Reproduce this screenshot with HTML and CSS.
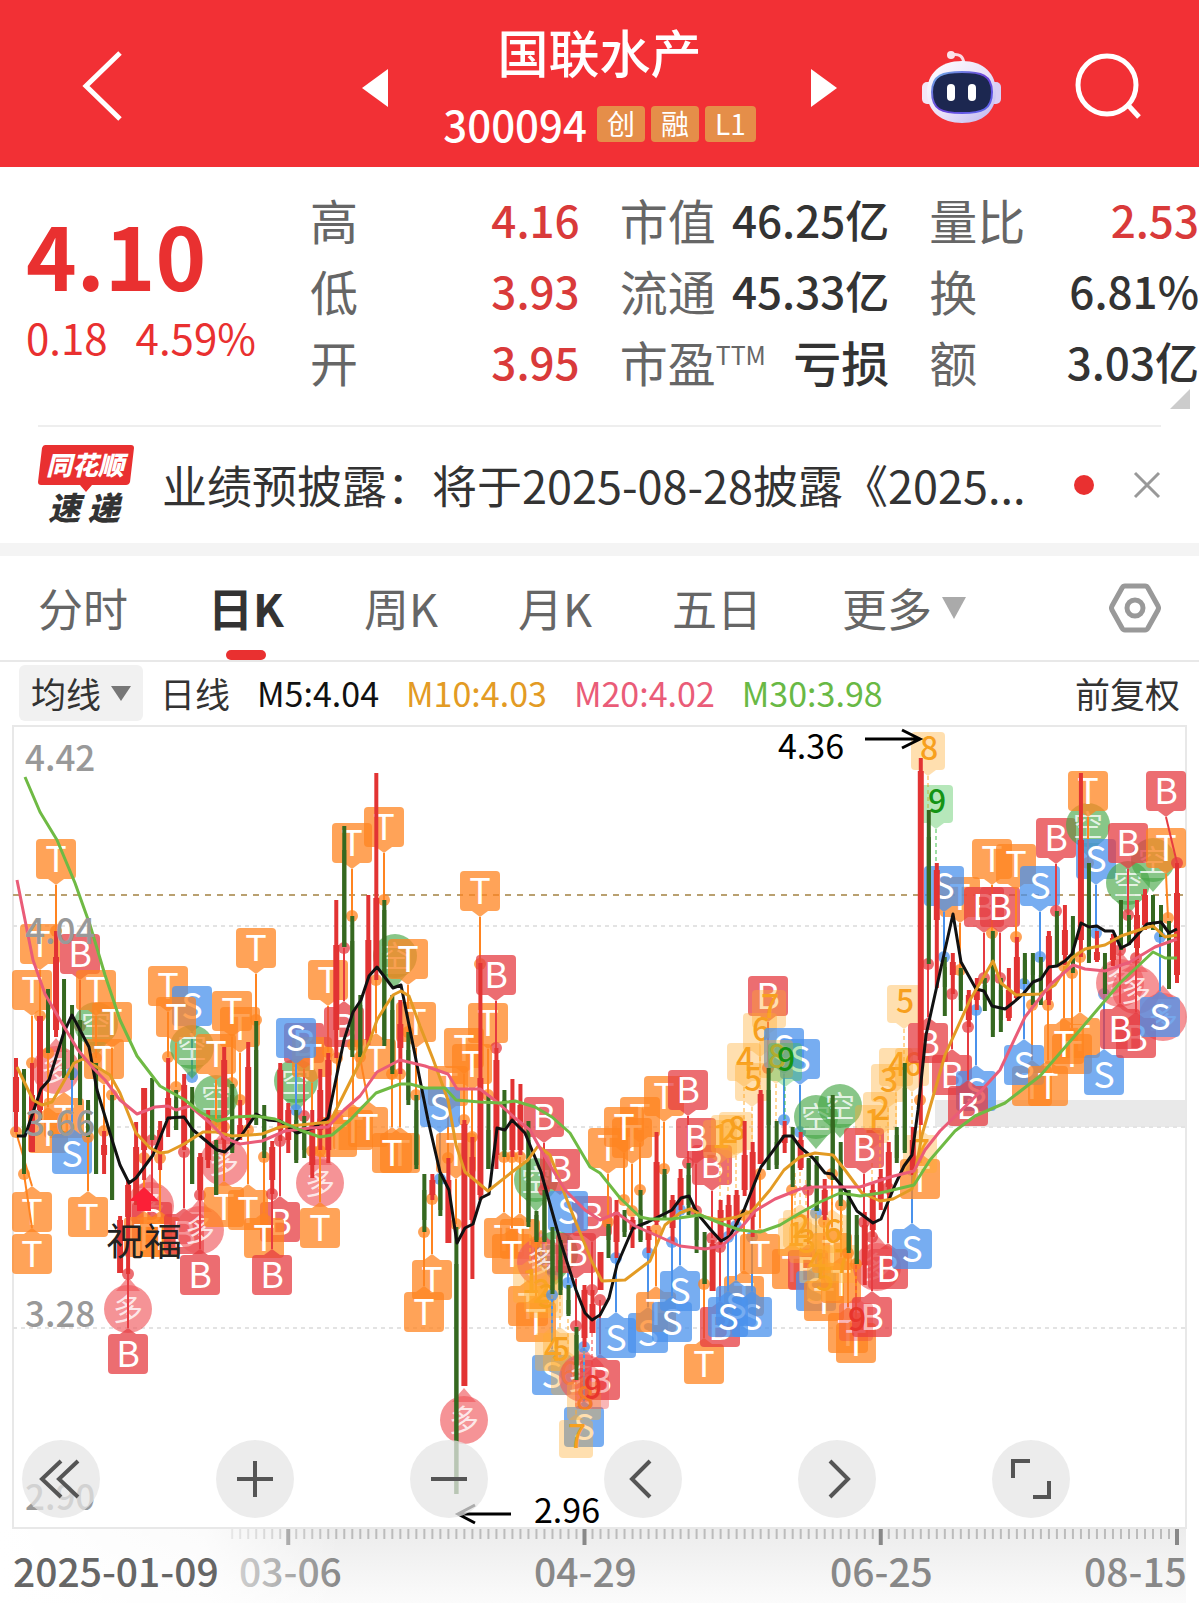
FILE: index.html
```html
<!DOCTYPE html>
<html lang="zh-CN">
<head>
  <meta charset="UTF-8" />
  <meta name="viewport" content="width=device-width, initial-scale=1.0"/>
  <title>国联水产 300094</title>
  <link rel="stylesheet" href="styles.css">
</head>
<body>
  <header class="top-bar">
    <button class="icon-button back-button" aria-label="返回">
      <svg width="40" height="70" viewBox="0 0 40 70"><path d="M38 2 L4 35 L38 68" fill="none" stroke="#fff" stroke-width="5"/></svg>
    </button>
    <div class="stock-switch">
      <button class="icon-button" aria-label="上一只">
        <svg width="26" height="40" viewBox="0 0 26 40"><path d="M26 1 V39 L0 20 Z" fill="#fff"/></svg>
      </button>
      <div class="stock-name">
        <h1>国联水产</h1>
        <div class="stock-code">
          <span>300094</span>
          <span class="badge">创</span>
          <span class="badge">融</span>
          <span class="badge">L1</span>
        </div>
      </div>
      <button class="icon-button" aria-label="下一只">
        <svg width="26" height="40" viewBox="0 0 26 40"><path d="M0 1 V39 L26 20 Z" fill="#fff"/></svg>
      </button>
    </div>
    <div class="top-actions">
      <button class="icon-button" aria-label="助手">
        <svg width="79" height="76" viewBox="0 0 79 76">
          <defs>
            <linearGradient id="shell" x1="0" y1="0" x2="1" y2="1">
              <stop offset="0" stop-color="#fff"/><stop offset=".55" stop-color="#e9e0f8"/><stop offset="1" stop-color="#b9b4f0"/>
            </linearGradient>
            <linearGradient id="rim" x1="0" y1="0" x2="1" y2="1">
              <stop offset="0" stop-color="#6fb6e8"/><stop offset=".5" stop-color="#6a3fd8"/><stop offset="1" stop-color="#5a6cf0"/>
            </linearGradient>
          </defs>
          <path d="M29 7 Q41 4 42 16" fill="none" stroke="#fbd9e2" stroke-width="3"/>
          <circle cx="29" cy="7" r="4" fill="#fbe3ea"/>
          <rect x="0" y="34" width="12" height="22" rx="5" fill="#f3e6f6"/>
          <rect x="67" y="34" width="12" height="22" rx="5" fill="#d9cff6"/>
          <path d="M40 13 C62 13 74 26 74 44 C74 64 60 75 40 75 C20 75 5 64 5 44 C5 26 18 13 40 13Z" fill="url(#shell)"/>
          <path d="M40 24 C59 24 70 27 70 44 C70 62 60 65 40 65 C20 65 10 62 10 44 C10 27 21 24 40 24Z" fill="#1c2750" stroke="url(#rim)" stroke-width="2"/>
          <rect x="25" y="36" width="8" height="17" rx="4" fill="#fff"/>
          <rect x="46" y="36" width="8" height="17" rx="4" fill="#fff"/>
        </svg>
      </button>
      <button class="icon-button" aria-label="搜索">
        <svg width="66" height="66" viewBox="0 0 66 66"><circle cx="32" cy="32" r="29" fill="none" stroke="#fff" stroke-width="5"/><path d="M52 51 L64 64" stroke="#fff" stroke-width="5"/></svg>
      </button>
    </div>
  </header>

  <section class="quote">
    <div class="price-box">
      <div class="price">4.10</div>
      <div class="change"><span>0.18</span><span>4.59%</span></div>
    </div>
    <dl class="stats">
      <div><dt>高</dt><dd class="up">4.16</dd></div>
      <div><dt>市值</dt><dd>46.25亿</dd></div>
      <div><dt>量比</dt><dd class="up">2.53</dd></div>
      <div><dt>低</dt><dd class="up">3.93</dd></div>
      <div><dt>流通</dt><dd>45.33亿</dd></div>
      <div><dt>换</dt><dd>6.81%</dd></div>
      <div><dt>开</dt><dd class="up">3.95</dd></div>
      <div><dt>市盈<sup>TTM</sup></dt><dd class="word">亏损</dd></div>
      <div><dt>额</dt><dd>3.03亿</dd></div>
    </dl>
    <svg class="expand-corner" width="20" height="20" viewBox="0 0 20 20"><path d="M20 0 V20 H0 Z" fill="#ccc"/></svg>
  </section>

  <section class="news">
    <svg class="news-logo" width="96" height="80" viewBox="0 0 96 80">
      <path d="M7 0 H93 Q96 0 96 3 L92 37 Q91 40 88 40 H54 L48 47 L42 40 H3 Q0 40 0 37 L4 3 Q5 0 7 0Z" fill="#e93030"/>
      <text x="47" y="30" class="logo-top">同花顺</text>
      <text x="46" y="75" class="logo-bottom">速 递</text>
    </svg>
    <a href="#" class="news-title">业绩预披露：将于2025-08-28披露《2025...</a>
    <span class="news-dot"></span>
    <button class="icon-button" aria-label="关闭">
      <svg width="28" height="28" viewBox="0 0 28 28"><path d="M2 2 L26 26 M26 2 L2 26" stroke="#999" stroke-width="3"/></svg>
    </button>
  </section>

  <nav class="tabs">
    <button>分时</button>
    <button class="active">日K</button>
    <button>周K</button>
    <button>月K</button>
    <button>五日</button>
    <button>更多<svg width="24" height="22" viewBox="0 0 24 22"><path d="M0 0 H24 L12 22 Z" fill="#aaa"/></svg></button>
    <button class="settings" aria-label="设置">
      <svg width="52" height="50" viewBox="0 0 52 50"><path d="M16 3 H36 Q38 3 39 5 L49 23 Q50 25 49 27 L39 45 Q38 47 36 47 H16 Q14 47 13 45 L3 27 Q2 25 3 23 L13 5 Q14 3 16 3Z" fill="none" stroke="#999" stroke-width="5"/><circle cx="26" cy="25" r="8" fill="none" stroke="#999" stroke-width="5"/></svg>
    </button>
  </nav>

  <div class="ma-row">
    <label class="ma-select">
      <select aria-label="指标"><option>均线</option><option>BOLL</option></select>
      <svg width="20" height="15" viewBox="0 0 20 15"><path d="M0 0 H20 L10 15 Z" fill="#777"/></svg>
    </label>
    <span class="ma-name">日线</span>
    <span class="ma-value m5">M5:4.04</span>
    <span class="ma-value m10">M10:4.03</span>
    <span class="ma-value m20">M20:4.02</span>
    <span class="ma-value m30">M30:3.98</span>
    <span class="adjust">前复权</span>
  </div>

  <div class="chart-box">
    <svg id="chart" viewBox="0 724 1199 879">
      <defs>
        <linearGradient id="axisBg" x1="0" y1="0" x2="0" y2="1">
          <stop offset="0" stop-color="#ececec"/><stop offset="1" stop-color="#fbfbfb"/>
        </linearGradient>
        <linearGradient id="axisFade" x1="0" y1="0" x2="1" y2="0">
          <stop offset="0" stop-color="#fff"/><stop offset=".6" stop-color="#fff" stop-opacity=".8"/><stop offset="1" stop-color="#fff" stop-opacity="0"/>
        </linearGradient>
      </defs>
    </svg>
    <div class="chart-buttons">
      <button aria-label="最左"><svg viewBox="0 0 78 78"><path d="M39 21 L20 39 L39 57 M56 21 L37 39 L56 57"/></svg></button>
      <button aria-label="放大"><svg viewBox="0 0 78 78"><path d="M39 21 V57 M21 39 H57"/></svg></button>
      <button aria-label="缩小"><svg viewBox="0 0 78 78"><path d="M21 39 H57"/></svg></button>
      <button aria-label="左移"><svg viewBox="0 0 78 78"><path d="M46 21 L28 39 L46 57"/></svg></button>
      <button aria-label="右移"><svg viewBox="0 0 78 78"><path d="M32 21 L50 39 L32 57"/></svg></button>
      <button aria-label="全屏"><svg viewBox="0 0 78 78"><path d="M21 38 V21 H38 M57 41 V57 H41"/></svg></button>
    </div>
  </div>

  <script src="chart.js"></script>
</body>
</html>
```
FILE: styles.css
```css
* {
  box-sizing: border-box;
}

body {
  font-family: "Noto Sans CJK SC", Roboto, sans-serif;
  background-color: #fff;
  color: #333;
  margin: 0;
}

button {
  font: inherit;
  color: inherit;
  background: none;
  border: none;
  padding: 0;
  cursor: pointer;
}

svg {
  display: block;
}

.icon-button {
  flex: none;
}

/* header */
.top-bar {
  display: grid;
  grid-template-columns: 1fr auto 1fr;
  align-items: center;
  height: 167px;
  padding-top: 4px;
  background-color: #f23035;
  color: #fff;
}

.back-button {
  justify-self: start;
  margin-left: 82px;
}

.stock-switch {
  display: flex;
  align-items: center;
  justify-content: space-between;
  width: 476px;
  padding-top: 4px;
}

.stock-name {
  display: flex;
  flex-direction: column;
  align-items: center;
}

.stock-name h1 {
  margin: 0;
  font-size: 51px;
  line-height: 72px;
  font-weight: 500;
}

.stock-code {
  display: flex;
  align-items: center;
  gap: 6px;
  font-size: 42px;
  line-height: 74px;
  font-weight: 500;
}

.badge {
  height: 36px;
  padding: 0 10px;
  border-radius: 4px;
  background-color: #e58e49;
  font-size: 28px;
  line-height: 34px;
  font-weight: 400;
}

.stock-code .badge:nth-child(2) {
  margin-left: 4px;
}

.top-actions {
  display: flex;
  align-items: center;
  justify-content: flex-end;
  gap: 74px;
  padding-right: 58px;
}

/* quote */
.quote {
  position: relative;
  display: flex;
  height: 258px;
  padding-top: 17px;
}

.price-box {
  width: 310px;
  padding: 12px 0 0 26px;
  color: #e93030;
}

.price {
  font-size: 86px;
  line-height: 116px;
  font-weight: 700;
}

.change {
  display: flex;
  gap: 28px;
  font-size: 42px;
  line-height: 50px;
}

.stats {
  flex: 1;
  display: grid;
  grid-template-columns: repeat(3, 1fr);
  grid-auto-rows: 71px;
  column-gap: 40px;
  margin: 0;
}

.stats div {
  display: flex;
  align-items: center;
  justify-content: space-between;
  white-space: nowrap;
}

.stats dt {
  font-size: 48px;
  line-height: 71px;
  color: #666;
}

.stats sup {
  font-size: 25px;
  line-height: 25px;
}

.stats dd {
  margin: 0;
  font-size: 44px;
  line-height: 71px;
  font-weight: 500;
}

.stats .word {
  font-size: 48px;
}

.stats .up {
  color: #d93a3a;
}

.expand-corner {
  position: absolute;
  right: 9px;
  bottom: 16px;
}

/* news */
.news {
  display: flex;
  align-items: center;
  height: 118px;
  margin: 0 38px;
  border-top: 2px solid #eee;
}

.news-logo {
  flex: none;
  margin-right: 28px;
  overflow: visible;
}

.logo-top,
.logo-bottom {
  font-weight: 900;
  font-style: italic;
  text-anchor: middle;
}

.logo-top {
  font-size: 26px;
  fill: #fff;
}

.logo-bottom {
  font-size: 32px;
  fill: #333;
}

.news-title {
  flex: 1;
  white-space: nowrap;
  font-size: 45px;
  line-height: 64px;
  color: #333;
  text-decoration: none;
}

.news-dot {
  flex: none;
  width: 20px;
  height: 20px;
  margin: 0 39px 0 30px;
  border-radius: 50%;
  background-color: #e93030;
}

/* tabs */
.tabs {
  display: flex;
  align-items: center;
  gap: 80px;
  height: 119px;
  padding: 0 38px;
  border-top: 13px solid #f4f4f4;
  border-bottom: 2px solid #e8e8e8;
  font-size: 45px;
  line-height: 104px;
  color: #666;
}

.tabs button {
  position: relative;
  display: flex;
  align-items: center;
  gap: 10px;
  white-space: nowrap;
}

.tabs .active {
  color: #333;
  font-weight: 700;
}

.tabs .active::after {
  content: '';
  position: absolute;
  left: 50%;
  bottom: 0;
  width: 40px;
  height: 10px;
  margin-left: -20px;
  border-radius: 5px;
  background-color: #e93030;
}

.tabs .settings {
  margin-left: auto;
}

/* moving averages */
.ma-row {
  display: flex;
  align-items: center;
  gap: 27px;
  height: 62px;
  padding: 0 19px;
  font-size: 35px;
  line-height: 56px;
  white-space: nowrap;
}

.ma-select {
  display: flex;
  align-items: center;
  height: 56px;
  padding: 0 12px;
  border-radius: 6px;
  background-color: #f1f1f1;
}

.ma-select select {
  width: 80px;
  border: none;
  padding: 0;
  background: none;
  appearance: none;
  font: inherit;
  color: inherit;
}

.ma-name {
  margin-left: -10px;
}

.ma-value {
  font-size: 34px;
}

.m5 {
  color: #111;
}

.m10 {
  color: #e39b24;
}

.m20 {
  color: #ea5c78;
}

.m30 {
  color: #69b945;
}

.adjust {
  margin-left: auto;
}

/* chart */
.chart-box {
  position: relative;
}

#chart {
  width: 100%;
  overflow: visible;
}

#chart .tag-text {
  font-size: 36px;
  text-anchor: middle;
  fill: #fff;
}

#chart .circle-text {
  font-size: 30px;
  text-anchor: middle;
  fill: #fff;
  fill-opacity: 0.8;
}

#chart .num-text {
  font-size: 32px;
  font-weight: 500;
  text-anchor: middle;
}

#chart .price-text {
  font-size: 35px;
  font-weight: 500;
  fill: #999;
}

#chart .date-text {
  font-size: 39px;
  font-weight: 500;
  fill: #888;
}

#chart .note-text {
  font-size: 34px;
  fill: #000;
}

#chart .mark-text {
  font-size: 38px;
  fill: #222;
}

.chart-buttons {
  position: absolute;
  left: 22px;
  right: 129px;
  bottom: 85px;
  display: flex;
  justify-content: space-between;
}

.chart-buttons button {
  width: 78px;
  height: 78px;
  border-radius: 50%;
  background-color: rgba(230, 230, 230, 0.75);
}

.chart-buttons path {
  fill: none;
  stroke: #555;
  stroke-width: 4;
}
```
FILE: chart.js
```js
const svg = document.getElementById("chart");
const NS = "http://www.w3.org/2000/svg";
const RED = "#e23333";
const GREEN = "#356820";
const step = 8.007;

// colour, high, low, body top, body bottom
const candles = [
  "r 1058 1132 1077 1112", "g 1069 1174 1082 1174", "r 1063 1152 1095 1152", "r 1016 1120 1016 1110", "g 989 1053 1005 1032",
  "r 931 1037 957 1030", "g 979 1078 1000 1078", "g 1005 1080 1020 1070", "g 1020 1105 1040 1100", "g 1100 1137 1105 1130",
  "g 1063 1174 1080 1174", "r 1131 1174 1145 1155", "g 1095 1200 1110 1200", "r 1216 1273 1220 1273", "r 1180 1274 1185 1217",
  "r 1122 1205 1147 1200", "r 1088 1180 1088 1150", "g 1078 1140 1090 1140", "r 1121 1170 1130 1150", "r 1058 1137 1098 1120",
  "g 1090 1130 1100 1130", "r 1074 1150 1085 1145", "g 1087 1184 1100 1184", "r 1153 1200 1157 1190", "r 1110 1168 1120 1160",
  "g 1140 1195 1145 1195", "r 1047 1150 1060 1140", "g 1084 1153 1095 1150", "r 1100 1140 1125 1135", "r 1042 1128 1067 1120",
  "g 1021 1125 1050 1115", "g 1105 1158 1115 1150", "r 1141 1194 1147 1180", "r 1063 1141 1070 1130", "r 1103 1153 1110 1140",
  "g 1110 1163 1120 1160", "g 1116 1158 1125 1150", "r 1110 1178 1125 1165", "r 1069 1150 1090 1130", "r 1053 1163 1060 1150",
  "r 900 1058 945 1030", "g 826 947 850 947", "g 916 1057 941 1050", "g 995 1057 1005 1057", "r 895 1045 940 1040",
  "r 773 980 898 970", "g 900 1046 910 1040", "g 995 1074 1010 1070", "r 1000 1074 1024 1048", "g 1032 1105 1050 1100",
  "g 1095 1169 1110 1165", "g 1174 1232 1190 1220", "r 1174 1200 1180 1195", "g 1174 1216 1180 1210", "r 1158 1243 1180 1243",
  "g 1227 1494 1264 1494", "r 1120 1386 1124 1386", "r 1137 1279 1157 1220", "r 963 1200 1078 1195", "g 1095 1169 1130 1169",
  "r 1048 1169 1060 1155", "g 1090 1157 1100 1150", "r 1079 1157 1100 1150", "r 1084 1155 1105 1150", "g 1121 1227 1140 1222",
  "g 1211 1242 1215 1240", "g 1190 1242 1200 1240", "g 1227 1294 1240 1290", "g 1240 1295 1260 1290", "g 1285 1316 1300 1314",
  "g 1327 1380 1335 1365", "r 1285 1347 1290 1338", "r 1290 1333 1304 1333", "r 1252 1290 1252 1290", "g 1224 1258 1226 1240",
  "r 1200 1258 1212 1242", "g 1210 1237 1217 1232", "r 1217 1248 1220 1230", "g 1190 1242 1210 1240", "r 1226 1253 1230 1240",
  "r 1132 1225 1162 1222", "g 1169 1220 1175 1215", "r 1195 1242 1200 1228", "r 1169 1210 1178 1205", "g 1163 1215 1175 1205",
  "g 1210 1253 1218 1240", "g 1232 1284 1247 1284", "r 1240 1291 1244 1291", "r 1200 1247 1210 1240", "r 1195 1237 1205 1220",
  "r 1190 1225 1195 1220", "r 1121 1196 1155 1190", "r 1142 1237 1152 1217", "r 1090 1164 1094 1164", "g 1068 1170 1090 1125",
  "g 1121 1169 1142 1165", "r 1121 1153 1135 1143", "g 1127 1187 1140 1180", "r 1132 1170 1140 1168", "g 1158 1187 1160 1180",
  "g 1156 1211 1165 1211", "r 1179 1220 1190 1215", "g 1095 1180 1120 1175", "g 1142 1206 1160 1200", "g 1190 1253 1200 1250",
  "g 1215 1264 1235 1264", "r 1212 1285 1225 1265", "r 1184 1237 1190 1230", "r 1169 1210 1177 1200", "r 1142 1195 1152 1187",
  "g 1127 1163 1135 1158", "g 1063 1153 1088 1150", "r 1127 1175 1140 1170", "r 758 1125 771 1060", "g 810 964 837 930",
  "r 863 988 870 920", "g 957 1016 967 987", "r 953 994 962 975", "g 968 1011 970 1000", "r 990 1027 995 1020",
  "r 978 1010 990 1000", "g 978 1011 985 1000", "g 931 1037 960 1030", "g 978 1032 990 1020", "r 968 1021 990 1018",
  "r 937 1000 957 998", "g 953 984 960 984", "g 953 1005 960 975", "g 957 1005 975 990", "r 931 1005 936 1000",
  "g 911 965 925 960", "r 905 965 930 955", "g 916 973 930 965", "r 773 957 840 940", "g 863 963 895 955",
  "r 931 962 952 960", "g 953 994 965 990", "r 934 966 938 960", "g 900 950 910 945", "g 915 945 922 940",
  "r 900 960 915 948", "r 889 930 895 925", "g 895 930 900 925", "g 905 937 915 935", "g 921 989 930 985", "r 863 983 893 975"
];

// type, centre x, top, pointer side, dot y, dot x
const tags = [
  "T 56 839 d 931", "T 40 924 d 1016", "T 32 970 d 1063", "B 80 934 d 1026", "O 56 1070 u", "K 96 1024 d", "T 96 970 d 1058",
  "T 104 1039 d 1131", "T 112 1002 d 1095", "T 64 1098 u", "T 48 1113 u 1053", "S 72 1134 u 1073", "T 32 1192 u 1132 16",
  "T 32 1234 u 1174 24", "T 88 1197 u 1137", "T 168 966 d 1057", "S 192 986 d 1077", "K 192 1047 d", "T 176 997 d 1087",
  "T 240 1007 d 1100", "T 232 991 d 1083", "K 216 1097 d", "T 216 1034 d 1125", "T 256 928 d 1020", "K 296 1081 d",
  "B 304 1023 d 1116", "T 312 1037 d 1151", "S 296 1018 d 1110", "O 128 1309 u", "B 128 1334 u 1274", "O 150 1206 u",
  "B 152 1202 u 1140", "T 144 1217 u 1158", "T 160 1217 u 1158", "B 184 1214 u 1152", "O 200 1230 u", "O 224 1162 u",
  "B 200 1255 u 1195", "B 280 1202 u 1141", "T 224 1187 u 1127", "T 248 1190 u 1130", "T 264 1218 u 1157", "B 272 1255 u 1194",
  "O 320 1183 u", "T 320 1208 u 1151", "T 328 960 d 1052", "B 344 1007 u 948", "T 352 823 d 916", "T 384 807 d 900",
  "K 395 956 d", "T 408 939 d 1032", "T 376 1039 u 980", "T 416 1002 d 1095", "T 337 1117 u 1058", "T 353 1110 u 1045",
  "T 368 1107 u 1057 360", "T 400 1133 u 1074", "T 392 1133 u 1074", "T 480 871 d 964", "T 488 1003 d 1095",
  "B 496 955 d 1048", "T 464 1028 d 1120", "T 448 1066 d 1158", "T 472 1044 d 1137", "S 440 1087 d 1179", "T 456 1133 d 1224",
  "T 432 1260 u 1199", "T 424 1292 u 1232", "O 464 1420 u", "T 504 1218 u 1157", "T 520 1219 u 1157", "T 512 1234 u 1157",
  "K 536 1180 d", "B 544 1097 d 1190", "B 560 1149 d", "B 592 1196 d 1290", "S 568 1191 d 1283", "K 556 1253 d", "O 541 1262 u",
  "B 576 1233 d 1326", "T 528 1286 u", "T 536 1302 u 1242", "N1 530 1265 u", "N2 541 1275 u", "N3 546 1280 u",
  "S 552 1355 u 1295", "N4 552 1333 u", "N5 560 1333 u", "N6 568 1357 u", "O 583 1378 u", "B 600 1360 u 1300",
  "S 584 1407 u 1347", "N7 576 1420 u", "N8 584 1382 u", "R9 592 1371 u", "S 616 1318 u 1258", "S 648 1313 u 1253",
  "T 656 1292 u 1230", "S 672 1302 u 1242", "S 680 1271 u 1210", "T 640 1097 d 1190", "T 664 1076 d 1169", "B 688 1070 d 1163",
  "T 608 1128 d 1222", "T 632 1118 d 1211", "T 624 1107 d 1200", "B 712 1145 d 1238", "B 696 1118 d 1211", "N1 720 1120 d",
  "N2 728 1115 d", "N8 736 1112 d", "T 704 1344 u 1284", "B 720 1307 u 1247", "T 744 1276 u 1215", "S 752 1297 u 1237",
  "S 736 1286 u 1226", "S 728 1297 u 1237", "T 760 1234 u 1174", "B 768 976 d 1068", "N7 769 990 d", "N6 760 1013 d",
  "N4 744 1043 d", "N5 752 1063 d", "S 784 1028 d 1120", "S 800 1039 d 1132", "N8 776 1040 d", "G9 785 1043 d", "K 816 1117 d",
  "K 840 1106 d", "T 792 1249 u 1190", "B 808 1250 u 1190", "S 816 1271 u 1213", "T 824 1281 u 1222", "T 832 1233 u 1174",
  "T 841 1263 u 1205", "N1 795 1218 u", "N2 800 1210 u", "N3 806 1225 u", "N4 816 1245 u", "N5 824 1263 u", "N6 832 1215 u",
  "N7 842 1245 u", "O 877 1267 u", "T 848 1313 u 1253", "T 856 1323 u 1264", "B 872 1297 u 1237", "B 888 1249 u 1188",
  "R9 856 1303 u", "S 912 1229 u 1170", "T 920 1159 u 1100", "N7 920 1135 u", "N1 872 1105 d", "B 864 1128 d 1222",
  "N2 880 1092 d", "N3 888 1064 d", "N4 896 1048 d", "N6 912 1048 d", "N5 904 985 d", "N8 928 732 d", "G9 936 785 d",
  "T 960 877 d 970", "S 944 866 d 957", "B 928 1023 u 964", "B 952 1055 u 994", "S 976 1071 u 1010", "B 968 1086 u 1027",
  "B 984 887 d 978", "T 992 839 d 933", "B 1000 887 d 978", "T 1016 844 d 937", "S 1040 866 d 957", "B 1056 818 d 911",
  "T 1032 1066 u 1005", "S 1024 1045 u 984", "T 1048 1066 u 1005", "T 1080 1018 u 957", "T 1072 1034 u 973", "T 1064 1024 u 966",
  "K 1088 825 d", "T 1088 771 d 863", "S 1096 839 d 933", "S 1104 1055 u 994", "K 1128 883 d", "K 1153 860 d", "B 1128 823 d 915",
  "T 1166 828 d 918 1168", "B 1166 771 d 863 1177", "O 1120 983 u", "O 1136 990 u", "O 1163 1017 u", "B 1136 1018 u 958",
  "B 1120 1009 u 950", "S 1160 997 u 937"
];

const averages = {
  "#111": "17,1136 25,1136 41,1089 49,1080 64,1032 72,1015 89,1047 97,1090 113,1143 120,1165 129,1183 136,1178 153,1155 168,1118 184,1117 193,1130 217,1150 225,1152 241,1136 256,1114 268,1120 280,1121 297,1133 313,1128 328,1118 344,1040 353,1012 361,1000 369,976 377,967 393,988 401,985 409,1025 416,1060 428,1120 440,1172 449,1190 457,1243 465,1228 473,1224 481,1198 489,1194 497,1128 505,1130 512,1120 525,1133 541,1172 560,1240 576,1290 585,1313 592,1320 600,1315 609,1298 617,1265 633,1228 648,1222 672,1210 681,1198 689,1196 697,1213 711,1230 721,1241 730,1236 744,1210 761,1167 784,1136 792,1136 800,1147 813,1158 825,1173 832,1174 845,1190 857,1211 873,1223 881,1219 895,1185 904,1166 912,1155 918,1110 926,1035 936,990 953,914 961,962 976,989 984,991 992,1006 1005,1009 1014,1002 1024,993 1033,982 1041,979 1049,967 1057,966 1065,961 1072,954 1081,923 1089,927 1097,926 1105,931 1113,931 1121,948 1129,944 1147,924 1161,922 1169,933 1177,929",
  "#e39b24": "17,1067 33,1100 42,1105 52,1102 63,1083 74,1063 83,1059 97,1067 110,1075 120,1093 136,1133 150,1148 160,1153 168,1152 184,1144 203,1132 216,1132 232,1136 250,1135 262,1134 280,1127 300,1125 330,1122 345,1092 361,1060 370,1040 377,1020 385,1007 393,995 401,991 409,996 420,1026 433,1059 448,1100 456,1145 465,1172 488,1191 512,1172 528,1160 538,1146 550,1155 565,1195 577,1225 592,1262 602,1281 625,1280 650,1261 665,1225 680,1213 690,1209 705,1217 720,1220 737,1217 752,1211 770,1190 784,1170 800,1157 815,1153 833,1155 845,1170 862,1193 880,1201 893,1199 912,1189 922,1135 945,1055 970,1000 993,961 1001,983 1016,995 1040,994 1055,985 1072,958 1085,949 1105,945 1121,936 1145,928 1153,926 1165,937 1177,935",
  "#ea5c78": "17,880 25,920 33,960 45,994 60,1020 78,1050 94,1069 105,1080 120,1100 137,1114 155,1107 168,1106 176,1110 190,1106 210,1123 225,1138 240,1144 262,1141 285,1131 310,1128 328,1127 344,1110 360,1096 377,1072 400,1060 425,1066 448,1074 457,1089 480,1089 497,1102 515,1118 530,1130 545,1157 565,1190 585,1210 600,1220 617,1213 635,1226 660,1237 680,1246 705,1249 722,1246 740,1229 755,1211 775,1199 800,1189 815,1187 860,1187 890,1177 914,1171 925,1150 940,1131 980,1092 1000,1070 1025,1017 1050,985 1073,965 1085,969 1105,971 1130,962 1155,947 1177,939",
  "#6fba44": "25,777 40,812 57,840 75,883 90,925 105,975 120,1020 137,1056 160,1086 185,1100 200,1112 217,1121 235,1117 255,1116 275,1119 300,1130 320,1137 332,1135 350,1120 376,1093 400,1084 410,1084 425,1088 445,1088 456,1100 480,1102 500,1103 515,1101 535,1107 552,1117 570,1133 590,1167 600,1173 620,1198 640,1217 650,1219 672,1219 700,1215 720,1223 740,1230 760,1232 780,1225 800,1213 820,1202 840,1193 860,1196 880,1193 914,1185 930,1160 955,1131 975,1116 1005,1103 1040,1076 1080,1030 1120,983 1153,952 1165,958 1177,958"
};

const colors = { T: "#ff8420", B: "#e63c41", S: "#4a92ec", O: "#f0595d", K: "#48a848", N: "#ffab2e", R: "#f04040", G: "#3fbf4a" };

function add(name, attrs, text) {
  const el = document.createElementNS(NS, name);
  for (const key in attrs) el.setAttribute(key, attrs[key]);
  if (text) el.textContent = text;
  svg.appendChild(el);
}

function line(x1, y1, x2, y2, stroke, width, dash) {
  add("line", { x1, y1, x2, y2, stroke, "stroke-width": width, "stroke-dasharray": dash || "none" });
}

// frame and grid
add("rect", { x: 935, y: 1100, width: 251, height: 27, fill: "#e9e9e9" });
add("rect", { x: 13, y: 726, width: 1173, height: 802, fill: "none", stroke: "#e8e8e8", "stroke-width": 2 });
[926, 1127, 1328].forEach(y => line(13, y, 1186, y, "#e3e3e3", 2, "4 4"));
line(13, 895, 1186, 895, "#b9a070", 2, "6 6");

// signal tags
function drawTag(row) {
  const [type, cx, cy, side, dot, dotX] = row.split(" ");
  const kind = type[0];
  const x = +cx;
  const y = +cy;
  const down = side === "d";
  const fill = colors[kind];

  if (kind === "O" || kind === "K") {
    const tip = down ? y + 32 : y - 32;
    const base = down ? y + 18 : y - 18;
    add("path", { d: `M${x - 12} ${base} L${x} ${tip} L${x + 12} ${base}Z`, fill, "fill-opacity": 0.65 });
    add("circle", { cx: x, cy: y, r: kind === "O" ? 24 : 22, fill, "fill-opacity": 0.65 });
    add("text", { x, y: y + 11, class: "circle-text" }, kind === "O" ? "多" : "空");
    return;
  }

  const num = type.length > 1;
  const w = num ? 34 : 40;
  const h = num ? 38 : 40;
  const edge = down ? y + h : y;
  const tip = down ? edge + 6 : edge - 6;
  const alpha = num ? 0.38 : 0.75;

  if (dot) {
    line(x, tip, dotX || x, dot, fill, 2);
    add("circle", { cx: dotX || x, cy: dot, r: 6, fill, "fill-opacity": 0.75 });
  } else if (num) {
    line(x, tip, x, down ? tip + 50 : tip - 40, fill, 1, "4 3");
  }
  add("rect", { x: x - w / 2, y, width: w, height: h, rx: 4, fill, "fill-opacity": alpha });
  add("path", { d: `M${x - 8} ${edge} L${x} ${tip} L${x + 8} ${edge}Z`, fill, "fill-opacity": alpha });
  if (num) {
    const ink = { N: "#f7a01e", R: "#e8352c", G: "#149414" }[kind];
    add("text", { x: x + 1, y: y + 28, class: "num-text", fill: ink }, type[1]);
  } else {
    add("text", { x, y: y + 33, class: "tag-text" }, type);
  }
}
tags.forEach(drawTag);

// candles
candles.forEach((row, i) => {
  const [c, high, low, top, bottom] = row.split(" ");
  const x = 16 + i * step;
  const color = c === "r" ? RED : GREEN;
  line(x, high, x, low, color, 4);
  line(x, top, x, bottom, color, c === "r" ? 6 : 4);
});

for (const color in averages) {
  add("polyline", { points: averages[color], fill: "none", stroke: color, "stroke-width": 3, "stroke-linejoin": "round" });
}

// price scale
[["4.42", 771], ["4.04", 944], ["3.66", 1136], ["3.28", 1327], ["2.90", 1510]].forEach(([text, y]) => {
  add("text", { x: 25, y, class: "price-text" }, text);
});

// high / low notes
add("text", { x: 778, y: 759, class: "note-text" }, "4.36");
add("path", { d: "M865 739 H920 M902 730 L920 739 L902 748", fill: "none", stroke: "#000", "stroke-width": 3 });
add("text", { x: 534, y: 1523, class: "note-text" }, "2.96");
add("path", { d: "M511 1514 H458 M475 1505 L458 1514 L475 1523", fill: "none", stroke: "#000", "stroke-width": 3 });
add("path", { d: "M144 1187 L159 1201 H151 V1211 H137 V1201 H129Z", fill: "#fb2037" });
add("text", { x: 106, y: 1255, class: "mark-text" }, "祝福");

// time scale
add("rect", { x: 0, y: 1529, width: 1186, height: 74, fill: "url(#axisBg)" });
for (let i = 27; i <= 145; i++) {
  const x = 16 + i * step;
  const major = [34, 71, 108, 145].includes(i);
  line(x, 1529, x, major ? 1545 : 1539, major ? "#888" : "#bbb", major ? 4 : 2);
}
[["03-06", 239], ["04-29", 534], ["06-25", 830], ["08-15", 1084]].forEach(([text, x]) => {
  add("text", { x, y: 1587, class: "date-text" }, text);
});
add("rect", { x: 0, y: 1529, width: 340, height: 74, fill: "url(#axisFade)" });
add("text", { x: 13, y: 1587, class: "date-text", style: "fill:#666" }, "2025-01-09");
```
